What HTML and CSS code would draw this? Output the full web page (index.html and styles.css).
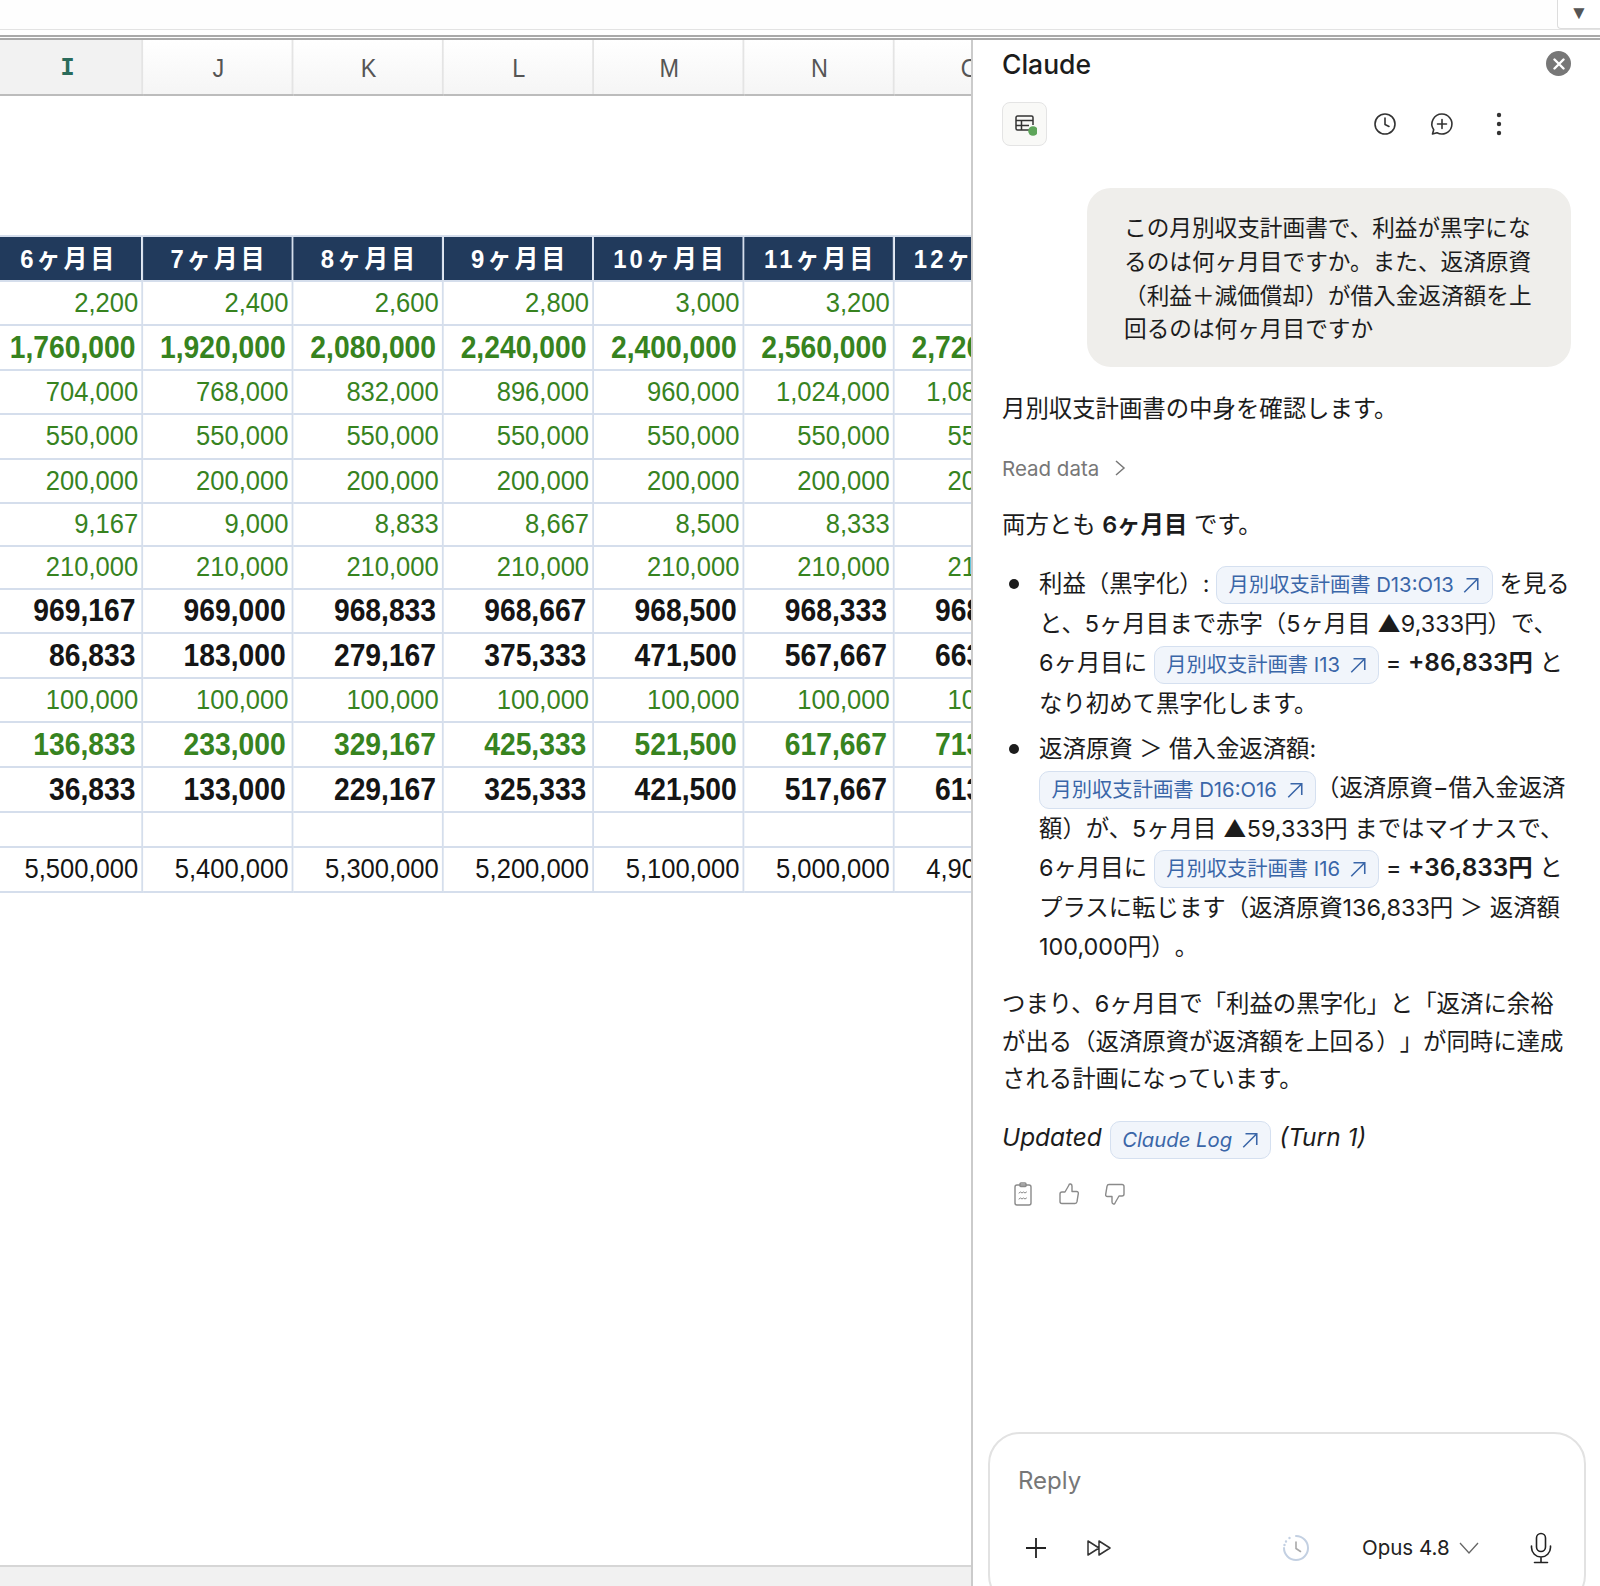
FILE: index.html
```html
<!DOCTYPE html>
<html lang="ja">
<head>
  <meta charset="UTF-8" />
  <meta name="viewport" content="width=device-width, initial-scale=1.0"/>
  <title>月別収支計画書 - Claude</title>
  <link rel="stylesheet" href="styles.css">
</head>
<body>

  <div class="formula-bar">
    <div class="formula-toggle">▼</div>
  </div>

  <div class="workspace">
    <div class="sheet">
      <div class="sheet-grid">
        <table class="grid">
          <thead>
            <tr class="col-row">
              <th class="active">I</th><th>J</th><th>K</th><th>L</th><th>M</th><th>N</th><th>O</th>
            </tr>
          </thead>
          <tbody>
            <tr class="gap-row"><td colspan="7"></td></tr>
            <tr class="head-row">
              <td>6ヶ月目</td><td>7ヶ月目</td><td>8ヶ月目</td><td>9ヶ月目</td><td>10ヶ月目</td><td>11ヶ月目</td><td>12ヶ月目</td>
            </tr>
            <tr class="green h44">
              <td>2,200</td><td>2,400</td><td>2,600</td><td>2,800</td><td>3,000</td><td>3,200</td><td>3,400</td>
            </tr>
            <tr class="green strong h45">
              <td>1,760,000</td><td>1,920,000</td><td>2,080,000</td><td>2,240,000</td><td>2,400,000</td><td>2,560,000</td><td>2,720,000</td>
            </tr>
            <tr class="green h44">
              <td>704,000</td><td>768,000</td><td>832,000</td><td>896,000</td><td>960,000</td><td>1,024,000</td><td>1,088,000</td>
            </tr>
            <tr class="green h45">
              <td>550,000</td><td>550,000</td><td>550,000</td><td>550,000</td><td>550,000</td><td>550,000</td><td>550,000</td>
            </tr>
            <tr class="green h44">
              <td>200,000</td><td>200,000</td><td>200,000</td><td>200,000</td><td>200,000</td><td>200,000</td><td>200,000</td>
            </tr>
            <tr class="green h43">
              <td>9,167</td><td>9,000</td><td>8,833</td><td>8,667</td><td>8,500</td><td>8,333</td><td>8,167</td>
            </tr>
            <tr class="green h43">
              <td>210,000</td><td>210,000</td><td>210,000</td><td>210,000</td><td>210,000</td><td>210,000</td><td>210,000</td>
            </tr>
            <tr class="strong h44">
              <td>969,167</td><td>969,000</td><td>968,833</td><td>968,667</td><td>968,500</td><td>968,333</td><td>968,167</td>
            </tr>
            <tr class="strong h45">
              <td>86,833</td><td>183,000</td><td>279,167</td><td>375,333</td><td>471,500</td><td>567,667</td><td>663,833</td>
            </tr>
            <tr class="green h44">
              <td>100,000</td><td>100,000</td><td>100,000</td><td>100,000</td><td>100,000</td><td>100,000</td><td>100,000</td>
            </tr>
            <tr class="green strong h45">
              <td>136,833</td><td>233,000</td><td>329,167</td><td>425,333</td><td>521,500</td><td>617,667</td><td>713,833</td>
            </tr>
            <tr class="strong h45">
              <td>36,833</td><td>133,000</td><td>229,167</td><td>325,333</td><td>421,500</td><td>517,667</td><td>613,833</td>
            </tr>
            <tr class="h35">
              <td></td><td></td><td></td><td></td><td></td><td></td><td></td>
            </tr>
            <tr class="h45">
              <td>5,500,000</td><td>5,400,000</td><td>5,300,000</td><td>5,200,000</td><td>5,100,000</td><td>5,000,000</td><td>4,900,000</td>
            </tr>
          </tbody>
        </table>
      </div>
      <div class="sheet-foot"></div>
    </div>

    <aside class="panel">
      <div class="panel-head">
        <h1>Claude</h1>
        <button class="close-btn">
          <svg width="12" height="12" viewBox="0 0 12 12"><path d="M1.500 1.500l9 9M10.500 1.500l-9 9" stroke="#fff" stroke-width="2.400" stroke-linecap="round"/></svg>
        </button>
      </div>

      <div class="tool-row">
        <div class="sheet-btn">
          <svg width="24" height="24" viewBox="0 0 24 24" fill="none" stroke="#333" stroke-width="1.500">
            <path d="M16 18H4.500A1.500 1.500 0 0 1 3 16.500V5.500A1.500 1.500 0 0 1 4.500 4h14A1.500 1.500 0 0 1 20 5.500V13"/>
            <path d="M3 8.500h17M3 13.500h13M8.500 8.500V18"/>
            <circle cx="20" cy="19" r="4.800" fill="#5ea55a" stroke="none"/>
          </svg>
        </div>
        <div class="tool-icons">
          <svg width="26" height="26" viewBox="0 0 26 26" fill="none" stroke="#333" stroke-width="1.600" stroke-linecap="round" stroke-linejoin="round">
            <circle cx="13" cy="13" r="10"/><path d="M13 7v6.500l4 2"/>
          </svg>
          <svg width="26" height="26" viewBox="0 0 26 26" fill="none" stroke="#333" stroke-width="1.600" stroke-linecap="round" stroke-linejoin="round">
            <path d="M13 3a10 10 0 1 1-5 18.700L3.500 23l1.200-4.300A10 10 0 0 1 13 3z"/><path d="M13 8.500v9M8.500 13h9"/>
          </svg>
          <svg width="26" height="26" viewBox="0 0 26 26" fill="#333">
            <circle cx="13" cy="4" r="2.200"/><circle cx="13" cy="13" r="2.200"/><circle cx="13" cy="22" r="2.200"/>
          </svg>
        </div>
      </div>

      <div class="bubble">
        この月別収支計画書で、利益が黒字にな<br>
        るのは何ヶ月目ですか。また、返済原資<br>
        （利益＋減価償却）が借入金返済額を上<br>
        回るのは何ヶ月目ですか
      </div>

      <p class="intro">月別収支計画書の中身を確認します。</p>

      <div class="read-data">
        Read data
        <svg width="14" height="20" viewBox="0 0 14 20" fill="none" stroke="#777" stroke-width="1.500"><path d="M3 3l8 7-8 7"/></svg>
      </div>

      <p class="answer">両方とも <b>6ヶ月目</b> です。</p>

      <ul class="points">
        <li>利益（黒字化）: <a class="pill">月別収支計画書 D13:O13 <svg class="arrow" viewBox="0 0 16 16"><path d="M2 14.500L14 2.500M4 2.500H14V12.500"/></svg></a> を見ると、5ヶ月目まで赤字（5ヶ月目 ▲9,333円）で、6ヶ月目に <a class="pill">月別収支計画書 I13 <svg class="arrow" viewBox="0 0 16 16"><path d="M2 14.500L14 2.500M4 2.500H14V12.500"/></svg></a> = <b>+86,833円</b> となり初めて黒字化します。</li>
        <li>返済原資 ＞ 借入金返済額:<br><a class="pill">月別収支計画書 D16:O16 <svg class="arrow" viewBox="0 0 16 16"><path d="M2 14.500L14 2.500M4 2.500H14V12.500"/></svg></a>（返済原資−借入金返済額）が、5ヶ月目 ▲59,333円 まではマイナスで、6ヶ月目に <a class="pill">月別収支計画書 I16 <svg class="arrow" viewBox="0 0 16 16"><path d="M2 14.500L14 2.500M4 2.500H14V12.500"/></svg></a> = <b>+36,833円</b> とプラスに転じます（返済原資136,833円 ＞ 返済額100,000円）。</li>
      </ul>

      <p class="summary">つまり、6ヶ月目で「利益の黒字化」と「返済に余裕が出る（返済原資が返済額を上回る）」が同時に達成される計画になっています。</p>

      <p class="log-line"><i>Updated <a class="pill">Claude Log <svg class="arrow" viewBox="0 0 16 16"><path d="M2 14.500L14 2.500M4 2.500H14V12.500"/></svg></a> (Turn 1)</i></p>

      <div class="feedback">
        <svg width="24" height="26" viewBox="0 0 24 26" fill="none" stroke="#8a8a8a" stroke-width="1.400" stroke-linecap="round" stroke-linejoin="round">
          <rect x="4" y="4" width="16" height="20" rx="2"/><path d="M9 4V3a1 1 0 0 1 1-1h4a1 1 0 0 1 1 1v1a1 1 0 0 1-1 1.500h-4A1 1 0 0 1 9 4z"/><path d="M8 12l1.500-1 1.500 1 1.500-1 1.500 1 1.500-1M8 18l1.500-1 1.500 1 1.500-1 1.500 1 1.500-1" stroke-width="1"/>
        </svg>
        <svg width="24" height="26" viewBox="0 0 24 26" fill="none" stroke="#8a8a8a" stroke-width="1.400" stroke-linecap="round" stroke-linejoin="round">
          <path d="M8 11l4-7c0-1.500 3-1.500 3 1v5.500h4.500c1.500 0 2 1 1.800 2.200l-1.300 8c-.2 1-1 1.800-2 1.800H5a2 2 0 0 1-2-2v-7.500A2 2 0 0 1 5 11z"/>
        </svg>
        <svg width="24" height="26" viewBox="0 0 24 26" fill="none" stroke="#8a8a8a" stroke-width="1.400" stroke-linecap="round" stroke-linejoin="round">
          <path d="M16 15l-4 7c0 1.500-3 1.500-3-1v-5.500H4.500c-1.500 0-2-1-1.800-2.200l1.300-8c.2-1 1-1.800 2-1.800H19a2 2 0 0 1 2 2v7.500a2 2 0 0 1-2 2z"/>
        </svg>
      </div>

      <div class="composer">
        <div class="reply">Reply</div>
        <div class="composer-tools">
          <svg class="plus" width="26" height="26" viewBox="0 0 26 26" fill="none" stroke="#222" stroke-width="1.800"><path d="M13 3v20M3 13h20"/></svg>
          <svg class="skip" width="28" height="22" viewBox="0 0 28 22" fill="none" stroke="#333" stroke-width="1.500" stroke-linejoin="round"><path d="M3 4l11 7-11 7zM14 4l11 7-11 7z"/></svg>
          <svg class="usage" width="30" height="30" viewBox="0 0 30 30" fill="none" stroke="#c3d0e2" stroke-width="2" stroke-linecap="round">
            <path d="M15 3a12 12 0 1 1-12 12"/><path d="M5 8.500v.01M8.500 5v.01M3.500 12v.01" stroke-width="2.400"/><path d="M15 9v6.500l4.500 3" stroke="#a9a9a9" stroke-width="1.600"/>
          </svg>
          <span class="model">Opus 4.8</span>
          <svg class="chev" width="22" height="14" viewBox="0 0 22 14" fill="none" stroke="#666" stroke-width="1.300"><path d="M2 2l9 10 9-10"/></svg>
          <svg class="mic" width="26" height="32" viewBox="0 0 26 32" fill="none" stroke="#222" stroke-width="1.600" stroke-linecap="round"><rect x="8.500" y="1.500" width="9" height="18" rx="4.500"/><path d="M3.500 14v1.500a9.500 9.500 0 0 0 19 0V14M13 25v5M6.500 30.500h13"/></svg>
        </div>
      </div>
    </aside>
  </div>

</body>
</html>
```

FILE: styles.css
```css
* {
  box-sizing: border-box;
}

html, body {
  height: 100%;
}

body {
  margin: 0;
  background: white;
  overflow: hidden;
  font-family: "Liberation Sans", "Noto Sans CJK JP", sans-serif;
}

.formula-bar {
  height: 40px;
  background: #fefefe;
  display: flex;
  justify-content: flex-end;
  border-bottom: 5px double #a9a9a9;
  box-shadow: inset 0 -6px 0 #fff;
  position: relative;
}

.formula-bar::after {
  content: "";
  position: absolute;
  left: 0;
  right: 0;
  top: 29px;
  height: 1px;
  background: #e3e3e3;
}

.formula-toggle {
  width: 43px;
  height: 29px;
  background: #fff;
  border-left: 1px solid #ddd;
  border-bottom: 1px solid #ddd;
  border-bottom-left-radius: 4px;
  font-size: 19px;
  color: #555;
  text-align: center;
  line-height: 25px;
}

.workspace {
  display: flex;
  height: 1546px;
}

/* sheet */
.sheet {
  width: 971px;
  flex: none;
  display: flex;
  flex-direction: column;
  overflow: hidden;
}

.sheet-grid {
  flex: 1;
  overflow: hidden;
}

.sheet-foot {
  height: 21px;
  background: #f1f1f1;
  border-top: 2px solid #d6d6d6;
}

.grid {
  table-layout: fixed;
  width: 1169px;
  margin-left: -9px;
  border-collapse: collapse;
  transform: scaleX(0.9);
  transform-origin: 0 0;
}

.col-row th {
  height: 55px;
  width: 167px;
  padding: 2px 0 0 2px;
  background: linear-gradient(#fff, #f5f5f5);
  border-right: 2px solid #e4e4e4;
  border-bottom: 2px solid #bcbcbc;
  font-size: 26px;
  font-weight: normal;
  color: #555;
}

.col-row th.active {
  background: #f2f2f2;
  font-family: "Liberation Mono", monospace;
  font-weight: bold;
  color: #2a6b5b;
}

.gap-row td {
  height: 141px;
  padding: 0;
}

.grid tbody tr:not(.gap-row) td {
  padding: 0 3.500px 2px 0;
  border: 2px solid #d5deec;
  text-align: right;
  font-size: 28.400px;
  white-space: nowrap;
  overflow: hidden;
  color: #151515;
}

.grid tbody tr.head-row td {
  height: 45px;
  padding: 0 0 4px 4px;
  background: #213a5c;
  color: white;
  text-align: center;
  font-size: 26.500px;
  font-weight: bold;
  letter-spacing: 3.500px;
}

.grid tbody tr.green td {
  color: #37831f;
}

.grid tbody tr.strong td {
  font-size: 31.400px;
  font-weight: bold;
  padding: 0 6.500px 0 0;
}

.h35 td { height: 35px; }
.h43 td { height: 43px; }
.h44 td { height: 44px; }
.h45 td { height: 45px; }

/* claude panel */
.panel {
  flex: 1;
  min-width: 0;
  border-left: 2px solid #cbcbcb;
  padding: 0 29px 0 29px;
  display: flex;
  flex-direction: column;
  overflow: hidden;
  font-family: Inter, "Noto Sans CJK JP", sans-serif;
  font-size: 23.400px;
  line-height: 37.500px;
  line-break: strict;
  text-spacing-trim: space-all;
  color: #1c1c1c;
}

.panel b {
  font-weight: 600;
}

.panel-head {
  display: flex;
  justify-content: space-between;
  align-items: center;
  height: 50px;
}

.panel-head h1 {
  margin: 0;
  font-size: 26.500px;
  font-weight: 500;
}

.close-btn {
  width: 25px;
  height: 25px;
  margin-top: -3px;
  padding: 0;
  border: none;
  border-radius: 50%;
  background: #777;
  display: flex;
  align-items: center;
  justify-content: center;
}

.tool-row {
  display: flex;
  align-items: center;
  justify-content: space-between;
  margin-top: 12px;
}

.sheet-btn {
  width: 45px;
  height: 44px;
  background: #f9f9f7;
  border: 1px solid #e4e4e4;
  border-radius: 8px;
  display: flex;
  align-items: center;
  justify-content: center;
}

.tool-icons {
  display: flex;
  gap: 31px;
  margin-right: 59px;
}

.bubble {
  margin: 42px 0 0 85px;
  padding: 23px 30px 21px 37px;
  width: 484px;
  background: #efeeeb;
  border-radius: 24px;
  font-size: 22.650px;
  line-height: 33.800px;
  white-space: nowrap;
}

.intro, .answer, .summary, .log-line {
  margin: 0;
}

.intro {
  margin-top: 23px;
}

.read-data {
  display: flex;
  align-items: center;
  gap: 14px;
  margin-top: 22px;
  font-size: 20.500px;
  color: #777;
}

.answer {
  margin-top: 19px;
}

.points {
  margin: 20px -6px 0 0;
  padding: 0 0 0 37px;
  list-style: none;
  line-height: 39px;
}

.points b {
  font-size: 24.400px;
}

.points li {
  position: relative;
  margin-bottom: 6px;
}

.points li::before {
  content: "";
  position: absolute;
  left: -30px;
  top: 15px;
  width: 10px;
  height: 10px;
  border-radius: 50%;
  background: #1c1c1c;
}

.pill {
  display: inline-block;
  height: 38px;
  padding: 0 11.500px;
  background: #f1f5fb;
  border: 1.500px solid #d5e0f0;
  border-radius: 10px;
  font-size: 20.300px;
  line-height: 35px;
  color: #3a66a8;
  vertical-align: middle;
}

.arrow {
  width: 18px;
  height: 18px;
  margin-left: 3px;
  vertical-align: -2px;
  fill: none;
  stroke: #3a66a8;
  stroke-width: 1.400;
}

.summary {
  margin-top: 13px;
}

.log-line {
  margin-top: 21px;
  font-size: 24.400px;
}

.log-line .pill {
  margin: 0 1px;
  vertical-align: -1px;
}

.feedback {
  display: flex;
  gap: 22px;
  margin: 22px 0 0 9px;
}

.composer {
  margin: auto -14px 0 -14px;
  width: 598px;
  height: 175px;
  flex: none;
  position: relative;
  top: 21px;
  border: 2px solid #e2e2e2;
  border-radius: 32px;
  padding: 28px 28px 0;
}

.reply {
  font-size: 24px;
  color: #777;
}

.composer-tools {
  display: flex;
  align-items: center;
  margin-top: 31px;
  height: 34px;
  color: #222;
}

.plus {
  margin-left: 5px;
}

.skip {
  margin-left: 36px;
}

.usage {
  margin-left: 168px;
}

.model {
  margin-left: 51px;
  font-size: 20.500px;
}

.chev {
  margin-left: 8px;
}

.mic {
  margin-left: 48px;
}
```
